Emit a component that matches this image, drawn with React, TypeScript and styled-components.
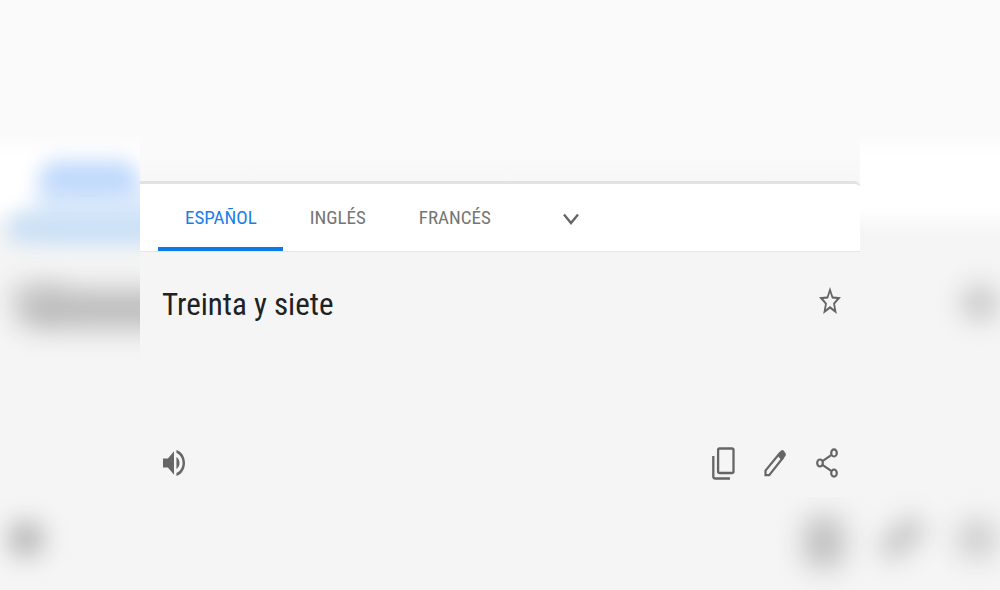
import React, { useState } from "react";
import styled, { createGlobalStyle } from "styled-components";

const GlobalStyle = createGlobalStyle`
  *, *::before, *::after { box-sizing: border-box; }
  body {
    margin: 0;
    background: #f5f5f5;
    font-family: "Roboto Condensed", Roboto, "Liberation Sans", sans-serif;
  }
  button { font-family: inherit; }
`;

const Page = styled.div`
  position: relative;
  min-height: 100vh;
  overflow: hidden;
  background: linear-gradient(#fafafa 0, #fafafa 134px, #ffffff 156px, #ffffff 206px, #f5f5f5 236px);
`;

const Backdrop = styled.div`
  position: absolute;
  inset: 0;
`;

type SmudgeProps = {
  $side: "left" | "right";
  $x: number;
  $y: number;
  $w: number;
  $h: number;
  $color: string;
  $blur?: number;
  $tilt?: number;
};

const Smudge = styled.span<SmudgeProps>`
  position: absolute;
  ${({ $side, $x }) => `${$side}: ${$x}px;`}
  top: ${({ $y }) => $y}px;
  width: ${({ $w }) => $w}px;
  height: ${({ $h }) => $h}px;
  border-radius: 16px;
  background: ${({ $color }) => $color};
  filter: blur(${({ $blur = 10 }) => $blur}px);
  transform: rotate(${({ $tilt = 0 }) => $tilt}deg);
`;

const Column = styled.main`
  position: relative;
  width: 72%;
  margin: 0 auto;
  padding-top: 181px;
  background: linear-gradient(#fafafa 0, #fafafa 150px, #f7f7f7 181px, #f5f5f5 190px);
`;

const Tabs = styled.div`
  display: flex;
  height: 71px;
  padding-left: 18px;
  border-top: 3px solid #e2e2e2;
  border-bottom: 1px solid #e6e6e6;
  border-top-right-radius: 6px;
  background: #ffffff;
`;

const Tab = styled.button<{ $active: boolean }>`
  padding: 5px 26px 0 27px;
  border: 0;
  border-bottom: 4px solid ${({ $active }) => ($active ? "#0b7bea" : "transparent")};
  background: none;
  color: ${({ $active }) => ($active ? "#1a7eea" : "#757575")};
  font-size: 19px;
  line-height: 24px;
  cursor: pointer;
`;

const MoreButton = styled.button`
  display: grid;
  place-items: center;
  width: 56px;
  margin-left: 26px;
  padding: 2px 0 0;
  border: 0;
  background: none;
  color: #666666;
  cursor: pointer;
`;

const Source = styled.section`
  padding: 32px 18px 16px 22px;
`;

const Row = styled.div`
  display: flex;
  align-items: center;
  justify-content: space-between;
`;

const Phrase = styled.h1`
  margin: 0;
  color: #202124;
  font-size: 31px;
  font-weight: 400;
  line-height: 42px;
`;

const Footer = styled(Row)`
  margin-top: 119px;
  padding-right: 3px;
`;

const Actions = styled.div`
  display: flex;
  align-items: center;
  gap: 28px;
`;

const IconButton = styled.button`
  display: grid;
  place-items: center;
  width: 24px;
  height: 36px;
  padding: 0;
  border: 0;
  background: none;
  color: #666666;
  cursor: pointer;
`;

const StarButton = styled(IconButton)`
  align-self: flex-start;
  margin-top: -2px;
`;

type GlyphProps = { box: string; width: number; height: number; children: React.ReactNode };

const Glyph = ({ box, width, height, children }: GlyphProps) => (
  <svg viewBox={box} width={width} height={height} preserveAspectRatio="none" fill="currentColor" aria-hidden="true">
    {children}
  </svg>
);

const languages = ["ESPAÑOL", "INGLÉS", "FRANCÉS"];

export default function App() {
  const [active, setActive] = useState(languages[0]);

  return (
    <>
      <GlobalStyle />
      <Page>
        <Backdrop aria-hidden="true">
          <Smudge $side="left" $x={34} $y={184} $w={140} $h={50} $color="#e0edfd" />
          <Smudge $side="left" $x={40} $y={161} $w={98} $h={36} $color="#c0d9fb" />
          <Smudge $side="left" $x={6} $y={212} $w={170} $h={32} $color="#cbe0f5" />
          <Smudge $side="left" $x={8} $y={280} $w={60} $h={36} $color="#e0e0e0" $blur={12} />
          <Smudge $side="left" $x={20} $y={290} $w={170} $h={38} $color="#bababa" $blur={14} />
          <Smudge $side="left" $x={8} $y={521} $w={36} $h={36} $color="#b8b8b8" $blur={12} />
          <Smudge $side="right" $x={2} $y={285} $w={36} $h={36} $color="#c8c8c8" $blur={13} />
          <Smudge $side="right" $x={156} $y={516} $w={40} $h={52} $color="#bebebe" $blur={14} />
          <Smudge $side="right" $x={72} $y={525} $w={52} $h={26} $color="#c6c6c6" $blur={13} $tilt={-42} />
          <Smudge $side="right" $x={4} $y={520} $w={38} $h={38} $color="#cacaca" $blur={14} />
        </Backdrop>
        <Column>
          <Tabs role="tablist">
            {languages.map((name) => (
              <Tab
                key={name}
                type="button"
                role="tab"
                aria-selected={name === active}
                $active={name === active}
                onClick={() => setActive(name)}
              >
                {name}
              </Tab>
            ))}
            <MoreButton type="button" aria-label="Más idiomas">
              <Glyph box="0 0 16 12" width={16} height={12}>
                <path d="M1 1.5 8 10 15 1.5" fill="none" stroke="currentColor" strokeWidth="2.4" />
              </Glyph>
            </MoreButton>
          </Tabs>
          <Source>
            <Row>
              <Phrase>Treinta y siete</Phrase>
              <StarButton type="button" aria-label="Guardar">
                <Glyph box="2 2 20 19" width={22} height={27}>
                  <path d="m22 9.24-7.19-.62L12 2 9.19 8.63 2 9.24l5.46 4.73L5.82 21 12 17.27 18.18 21l-1.63-7.03L22 9.24zM12 15.4l-3.76 2.27 1-4.28-3.32-2.88 4.38-.38L12 6.1l1.71 4.04 4.38.38-3.32 2.88 1 4.28L12 15.4z" />
                </Glyph>
              </StarButton>
            </Row>
            <Footer>
              <IconButton type="button" aria-label="Escuchar">
                <Glyph box="3 3.2 18 17.6" width={22} height={26}>
                  <path d="M3 9v6h4l5 5V4L7 9H3zm13.5 3c0-1.77-1.02-3.29-2.5-4.03v8.05c1.48-.73 2.5-2.25 2.5-4.02zM14 3.23v2.06c2.89.86 5 3.54 5 6.71s-2.11 5.85-5 6.71v2.06c4.01-.91 7-4.49 7-8.77s-2.99-7.86-7-8.77z" />
                </Glyph>
              </IconButton>
              <Actions>
                <IconButton type="button" aria-label="Copiar">
                  <Glyph box="0 0 23 33" width={23} height={33}>
                    <g fill="none" stroke="currentColor" strokeWidth="2.3">
                      <rect x="6.1" y="1.5" width="15.4" height="24.5" rx="1.6" />
                      <path d="M1.3 9v20.500q0 2 2 2H18" />
                    </g>
                  </Glyph>
                </IconButton>
                <IconButton type="button" aria-label="Editar">
                  <Glyph box="0 0 22 28" width={22} height={28}>
                    <path d="M1.5 26.2v-4.6L15.5 4.5l3.5 4.3L5.2 26.2z" fill="none" stroke="currentColor" strokeWidth="2.2" />
                    <path d="M13.3 6.3 17 1.6q1.300-1.200 2.600 0l1.800 2.500q.9 1.500 0 2.900L17.700 11.800z" />
                  </Glyph>
                </IconButton>
                <IconButton type="button" aria-label="Compartir">
                  <Glyph box="0 0 22 30" width={22} height={30}>
                    <g fill="none" stroke="currentColor" strokeWidth="2.2">
                      <ellipse cx="4" cy="15" rx="2.8" ry="3.5" />
                      <ellipse cx="18" cy="4.9" rx="2.8" ry="3.6" />
                      <ellipse cx="18" cy="25.1" rx="2.8" ry="3.6" />
                      <path d="M6.5 13.2 15.5 6.8M6.5 16.8 15.5 23.2" />
                    </g>
                  </Glyph>
                </IconButton>
              </Actions>
            </Footer>
          </Source>
        </Column>
      </Page>
    </>
  );
}
